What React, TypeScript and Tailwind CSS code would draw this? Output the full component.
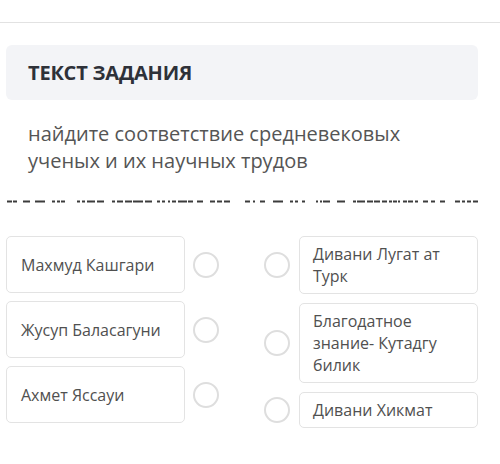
import React from "react";

const dashes: [number, number][] = [
  [7, 12], [13, 17], [23, 30], [35, 45], [52, 55], [57, 60], [61, 65], [77, 80], [82, 85], [87, 95], [97, 104],
  [112, 115], [117, 123], [125, 132], [133, 143], [145, 152], [157, 160], [162, 165], [168, 170], [172, 176],
  [178, 187], [188, 193], [197, 203], [210, 215], [217, 222], [224, 230], [245, 250],
  [253, 255], [260, 265], [273, 283], [290, 293], [295, 298], [302, 305], [316, 318], [320, 322], [323, 330],
  [337, 345], [353, 356], [357, 365], [367, 373], [374, 380], [382, 387], [389, 392], [393, 397], [398, 400],
  [403, 407], [408, 413], [415, 418], [423, 428], [431, 435], [440, 445], [455, 460], [462, 465], [467, 471], [473, 478],
];

function Card({ children, className }: { children: React.ReactNode; className?: string }) {
  return (
    <div className={"w-[179px] border border-[#e3e3e3] rounded-[5px] bg-white text-[16px] leading-[22px] text-[#505050] " + (className ?? "")}>
      {children}
    </div>
  );
}

function Circle() {
  return <div className="w-[26px] h-[26px] shrink-0 rounded-full border-2 border-[#dedede] bg-white" />;
}

export default function App() {
  return (
    <div className="w-[500px] h-[464px] bg-white overflow-hidden font-['Open_Sans',sans-serif]">
      <div className="h-[22px] bg-white" />
      <div className="h-px bg-[#e2e2e2]" />
      <div className="pt-[22px] pl-[6px] pr-[22px]">
        <div className="h-[55px] rounded-[6px] bg-[#f3f4f7] flex items-center pl-[22px]">
          <span className="text-[20px] font-bold text-[#2e3139] tracking-[-0.2px]">ТЕКСТ ЗАДАНИЯ</span>
        </div>
      </div>
      <div className="mt-[20px] pl-[28px] pr-[40px] text-[20px] leading-[27px] text-[#555555]">
        найдите соответствие средневековых
        <br />
        ученых и их научных трудов
      </div>
      <div className="mt-[26px] h-[3px]">
        <svg width="500" height="3" viewBox="0 0 500 3" className="block">
          {dashes.map(([a, b], i) => (
            <rect key={i} x={a} y={0.5} width={b - a} height={2} fill="#3c3c3c" />
          ))}
        </svg>
      </div>
      <div className="mt-[33px] flex pl-[6px]">
        <div className="flex flex-col gap-[8px]">
          {["Махмуд Кашгари", "Жусуп Баласагуни", "Ахмет Яссауи"].map((t) => (
            <div key={t} className="flex items-center gap-[8px]">
              <Card className="h-[57px] flex items-center px-[14px]">{t}</Card>
              <Circle />
            </div>
          ))}
        </div>
        <div className="ml-[45px] flex flex-col gap-[9px]">
          {["Дивани Лугат ат Турк", "Благодатное знание- Кутадгу билик", "Дивани Хикмат"].map((t) => (
            <div key={t} className="flex items-center gap-[9px]">
              <Circle />
              <Card className="py-[6px] px-[13px]">{t}</Card>
            </div>
          ))}
        </div>
      </div>
    </div>
  );
}
